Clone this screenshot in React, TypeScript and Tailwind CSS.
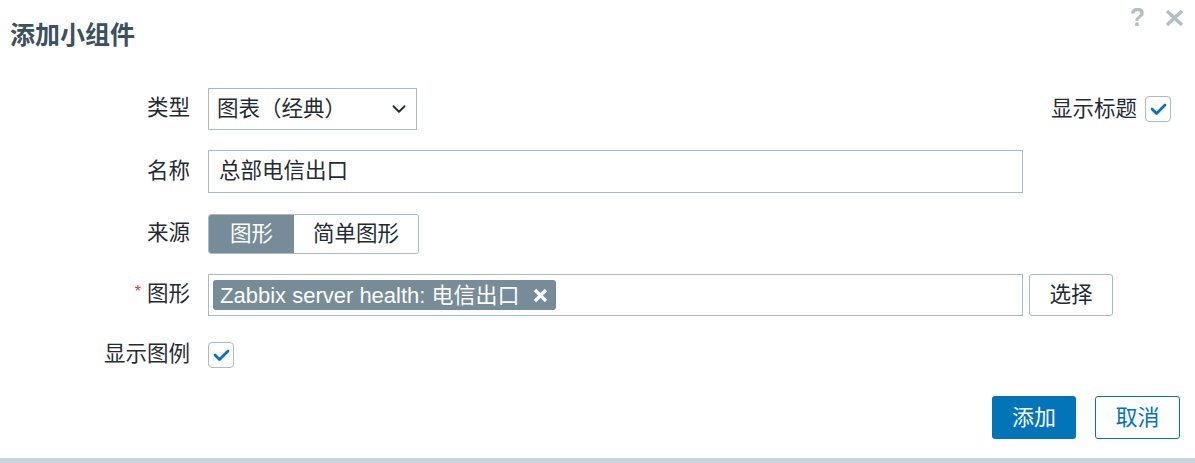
import React from 'react';
import { ChevronDown } from 'lucide-react';

const font = '"Liberation Sans", "Noto Sans CJK SC", sans-serif';

const Check: React.FC = () => (
  <div className="w-[26px] h-[26px] rounded-[4px] border border-[#acbbc2] bg-white flex items-center justify-center">
    <svg width="17" height="14" viewBox="0 0 17 14" fill="none">
      <path d="M2 7 L6.5 11.5 L15 3" stroke="#0275b8" strokeWidth="2.8" strokeLinecap="round" strokeLinejoin="round" />
    </svg>
  </div>
);

const Row: React.FC<{ label: React.ReactNode; className?: string; children: React.ReactNode }> = ({ label, className, children }) => (
  <div className={`flex items-center ${className || ''}`}>
    <div className="w-[190px] shrink-0 text-right text-[21.5px] text-[#1f2c33] leading-none">{label}</div>
    <div className="ml-[18px] flex-1 flex items-center">{children}</div>
  </div>
);

const App: React.FC = () => {
  return (
    <div className="w-[1195px] h-[463px] bg-white flex flex-col overflow-hidden" style={{ fontFamily: font }}>
      <div className="h-[88px] flex justify-between shrink-0">
        <h2 className="pl-[10px] pt-[20px] text-[25px] font-bold text-[#3c505d] leading-[30px]">添加小组件</h2>
        <div className="flex gap-[20px] pt-[5px] pr-[11px] text-[#b0bec5] text-[25px] font-bold leading-none">
          <span>?</span>
          <svg width="19" height="16" viewBox="0 0 19 16" className="mt-[5px]">
            <path d="M2 1 L17 15 M17 1 L2 15" stroke="#b0bec5" strokeWidth="3.4" />
          </svg>
        </div>
      </div>

      <Row label="类型" className="h-[42px]">
        <div className="w-[209px] h-[42px] border border-[#acbbc2] flex items-center justify-between pl-[8px] pr-[6px] text-[21.5px] text-[#1f2c33]">
          <span>图表（经典）</span>
          <ChevronDown size={22} strokeWidth={2} color="#1f2c33" />
        </div>
        <div className="ml-auto mr-[24px] flex items-center gap-[8px] text-[21.5px] text-[#1f2c33]">
          <span>显示标题</span>
          <Check />
        </div>
      </Row>

      <Row label="名称" className="mt-[20px] h-[43px]">
        <div className="w-[815px] h-[43px] border border-[#acbbc2] flex items-center pl-[10px] text-[21.5px] text-[#1f2c33]">
          总部电信出口
        </div>
      </Row>

      <Row label="来源" className="mt-[21px] h-[40px]">
        <div className="flex h-[40px] rounded-[3px] border border-[#acbbc2] overflow-hidden text-[21.5px]">
          <div className="w-[85px] bg-[#768d99] text-white flex items-center justify-center">图形</div>
          <div className="w-[124px] bg-white text-[#1f2c33] flex items-center justify-center">简单图形</div>
        </div>
      </Row>

      <Row
        label={
          <span>
            <span className="text-[#e33734] text-[16px] align-top mr-[6px]">*</span>图形
          </span>
        }
        className="mt-[20px] h-[42px]"
      >
        <div className="w-[815px] h-[42px] border border-[#acbbc2] flex items-center pl-[4px]">
          <div className="h-[30px] rounded-[3px] bg-[#768d99] text-white text-[22px] flex items-center pl-[7px] pr-[8px] gap-[13px]">
            <span>Zabbix server health: 电信出口</span>
            <svg width="15" height="15" viewBox="0 0 15 15">
              <path d="M2 2 L13 13 M13 2 L2 13" stroke="#ffffff" strokeWidth="3.2" />
            </svg>
          </div>
        </div>
        <div className="ml-[6px] w-[84px] h-[42px] rounded-[3px] border border-[#acbbc2] flex items-center justify-center text-[21.5px] text-[#1f2c33]">
          选择
        </div>
      </Row>

      <Row label="显示图例" className="mt-[26px] h-[26px]">
        <Check />
      </Row>

      <div className="mt-[28px] flex justify-end gap-[19px] pr-[15px]">
        <button className="w-[84px] h-[43px] rounded-[3px] bg-[#0275b8] text-white text-[22px]">添加</button>
        <button className="w-[85px] h-[43px] rounded-[3px] border border-[#0275b8] bg-white text-[#0275b8] text-[22px]">取消</button>
      </div>

      <div className="mt-auto h-[5px] bg-[#cdd5db]" />
    </div>
  );
};

export default App;
